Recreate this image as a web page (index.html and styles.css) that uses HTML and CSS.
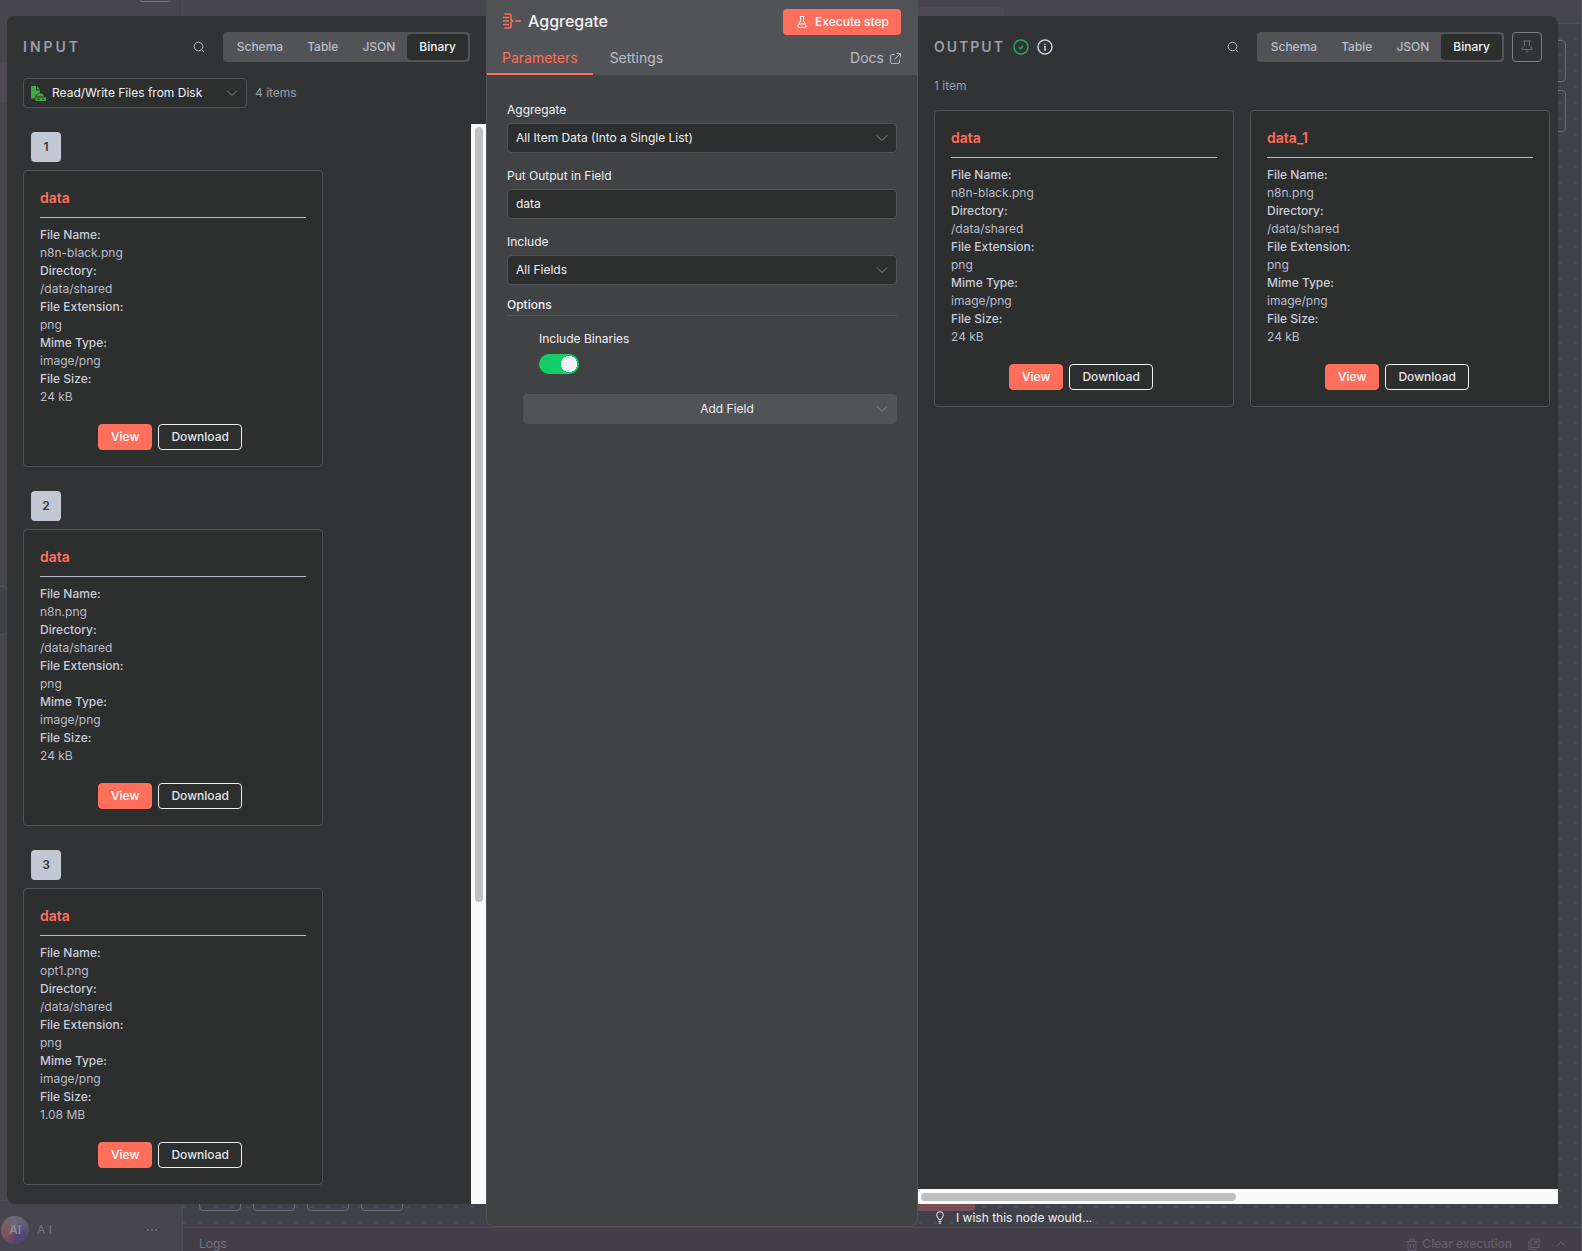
FILE: index.html
```html
<!DOCTYPE html>
<html lang="en">
  <head>
  <meta charset="utf-8">
  <title>Aggregate</title>
  <link rel="stylesheet" href="styles.css">
  </head>
  <body>

    <!-- icons used more than once -->
    <svg class="sprite" aria-hidden="true">
      <symbol id="chevron" viewBox="0 0 12 12"><path d="M1 3.5l5 5 5-5"/></symbol>
      <symbol id="search" viewBox="0 0 12 12"><circle cx="5.5" cy="5.5" r="4.3"/><path d="M8.8 8.8l2.4 2.4"/></symbol>
    </svg>

    <!-- editor, dimmed behind the dialog -->
    <div class="editor">
      <aside class="sidebar">
        <div class="sidebar-button"></div>
        <div class="sidebar-item"></div>
        <div class="user">
          <span class="avatar">AI</span>
          <span>A I</span>
          <svg class="user-more" width="12" height="4" viewBox="0 0 12 4"><circle cx="2" cy="2" r="1"/><circle cx="6" cy="2" r="1"/><circle cx="10" cy="2" r="1"/></svg>
        </div>
      </aside>
      <main class="workspace">
        <header class="topbar"><div class="topbar-tabs"></div></header>
        <div class="canvas">
          <div class="canvas-tools"><i></i><i></i></div>
          <div class="canvas-controls"><i></i><i></i><i></i><i></i></div>
          <div class="canvas-run"></div>
        </div>
        <footer class="logs">
          <span>Logs</span>
          <span class="logs-actions">
            <svg width="12" height="13" viewBox="0 0 12 13"><path d="M.5 3.5h11M2 3.5v8q0 1 1 1h6q1 0 1-1v-8M4 3V1h4v2M4.5 6v4M7.5 6v4"/></svg>
            <span class="logs-clear">Clear execution</span>
            <svg width="12" height="12" viewBox="0 0 12 12"><path d="M3 1h8v8.500h-8zM1 3v8.500h8M5 7.500l4-4M6 3.500h3v3"/></svg>
            <svg width="10" height="8" viewBox="0 0 10 8"><path d="M1 6l4-4 4 4"/></svg>
          </span>
        </footer>
      </main>
    </div>

    <div class="handle"></div>

    <div class="dialog">

      <!-- **************** INPUT ****************-->
      <section class="panel input">
        <div class="panel-head">
          <h2>INPUT</h2>
          <button class="icon-button" aria-label="Search input"><svg class="line" width="12" height="12"><use href="#search"/></svg></button>
          <div class="tabs">
            <button>Schema</button><button>Table</button><button>JSON</button><button class="active">Binary</button>
          </div>
        </div>
        <div class="source">
          <div class="select source-select">
            <svg class="file-icon" width="15" height="15" viewBox="0 0 15 15"><path d="M0 0h5v4.500h4v2L5 8.500 4 12.500H0zM6 0l3 3.500H6zM7 7.500h4l2.500 3H5zM4.500 11.500H15V15H4.500z"/><path class="file-slot" d="M6 13.200h3M11 13.200h2"/></svg>
            <select aria-label="Input node"><option>Read/Write Files from Disk</option></select>
            <svg class="chevron" width="12" height="12"><use href="#chevron"/></svg>
          </div>
          <span class="count">4 items</span>
        </div>
        <div class="input-scroll">
          <div class="input-list">
            <span class="index">1</span>
            <article class="card">
              <h3>data</h3>
              <dl>
                <dt>File Name:</dt><dd>n8n-black.png</dd>
                <dt>Directory:</dt><dd>/data/shared</dd>
                <dt>File Extension:</dt><dd>png</dd>
                <dt>Mime Type:</dt><dd>image/png</dd>
                <dt>File Size:</dt><dd>24 kB</dd>
              </dl>
              <div class="card-buttons"><button class="view">View</button><button class="download">Download</button></div>
            </article>
            <span class="index">2</span>
            <article class="card">
              <h3>data</h3>
              <dl>
                <dt>File Name:</dt><dd>n8n.png</dd>
                <dt>Directory:</dt><dd>/data/shared</dd>
                <dt>File Extension:</dt><dd>png</dd>
                <dt>Mime Type:</dt><dd>image/png</dd>
                <dt>File Size:</dt><dd>24 kB</dd>
              </dl>
              <div class="card-buttons"><button class="view">View</button><button class="download">Download</button></div>
            </article>
            <span class="index">3</span>
            <article class="card">
              <h3>data</h3>
              <dl>
                <dt>File Name:</dt><dd>opt1.png</dd>
                <dt>Directory:</dt><dd>/data/shared</dd>
                <dt>File Extension:</dt><dd>png</dd>
                <dt>Mime Type:</dt><dd>image/png</dd>
                <dt>File Size:</dt><dd>1.08 MB</dd>
              </dl>
              <div class="card-buttons"><button class="view">View</button><button class="download">Download</button></div>
            </article>
          </div>
          <div class="bar-vertical"><div class="thumb"></div></div>
        </div>
      </section>

      <!-- **************** NODE PARAMETERS ****************-->
      <section class="node">
        <header class="node-head">
          <div class="node-title">
            <svg class="aggregate-icon" width="18" height="18" viewBox="0 0 18 18"><path d="M1.500 1H6q2 0 2 2v3q0 2 2.500 2Q8 8 8 10v3q0 2-2 2H1.500M0 4.500h6M0 8h6M0 11.500h6M12.500 8H18"/></svg>
            <h1>Aggregate</h1>
            <button class="execute">
              <svg width="10" height="12" viewBox="0 0 10 12"><path d="M2.500.600h5M3.500.600v4.200L.800 10q-.400 1.300.900 1.300h6.600q1.300 0 .9-1.300L6.500 4.800V.600M2 8h6"/></svg>
              Execute step
            </button>
          </div>
          <nav class="node-tabs">
            <button class="active">Parameters</button>
            <button>Settings</button>
            <a href="#docs">Docs
              <svg width="11" height="11" viewBox="0 0 11 11"><path d="M4.500 1.600H1.500q-.900 0-.900.900v7q0 .900.900.900h7q.900 0 .900-.900V6.500M6.500.600h3.900v3.900M10.200.800L4.500 6.500"/></svg>
            </a>
          </nav>
        </header>
        <form class="params">
          <label for="aggregate">Aggregate</label>
          <div class="select">
            <select id="aggregate"><option>All Item Data (Into a Single List)</option></select>
            <svg class="chevron" width="12" height="12"><use href="#chevron"/></svg>
          </div>
          <label for="field">Put Output in Field</label>
          <input id="field" type="text" value="data">
          <label for="include">Include</label>
          <div class="select">
            <select id="include"><option>All Fields</option></select>
            <svg class="chevron" width="12" height="12"><use href="#chevron"/></svg>
          </div>
          <h4>Options</h4>
          <div class="option">
            <label for="binaries">Include Binaries</label>
            <input id="binaries" type="checkbox" class="switch" checked>
          </div>
          <div class="select add-field">
            <select aria-label="Add Field"><option>Add Field</option></select>
            <svg class="chevron" width="12" height="12"><use href="#chevron"/></svg>
          </div>
        </form>
      </section>

      <!-- **************** OUTPUT ****************-->
      <div class="output-column">
        <section class="panel output">
          <div class="panel-head">
            <h2>OUTPUT</h2>
            <svg class="status success" width="16" height="16" viewBox="0 0 16 16"><circle cx="8" cy="8" r="7"/><path d="M5.800 8.200l1.500 1.500 2.900-3"/></svg>
            <svg class="status" width="16" height="16" viewBox="0 0 16 16"><circle cx="8" cy="8" r="7"/><path d="M8 4.500v1.200M7 7.500h1v3.500M7 11h2"/></svg>
            <button class="icon-button" aria-label="Search output"><svg class="line" width="12" height="12"><use href="#search"/></svg></button>
            <div class="tabs">
              <button>Schema</button><button>Table</button><button>JSON</button><button class="active">Binary</button>
            </div>
            <button class="pin" aria-label="Pin data"><svg width="12" height="14" viewBox="0 0 12 14"><path d="M2 1h8M3.500 1v4.500L1.200 8v1.500h9.600V8L8.500 5.500V1M6 9.500V13"/></svg></button>
          </div>
          <p class="count">1 item</p>
          <div class="output-list">
            <article class="card">
              <h3>data</h3>
              <dl>
                <dt>File Name:</dt><dd>n8n-black.png</dd>
                <dt>Directory:</dt><dd>/data/shared</dd>
                <dt>File Extension:</dt><dd>png</dd>
                <dt>Mime Type:</dt><dd>image/png</dd>
                <dt>File Size:</dt><dd>24 kB</dd>
              </dl>
              <div class="card-buttons"><button class="view">View</button><button class="download">Download</button></div>
            </article>
            <article class="card">
              <h3>data_1</h3>
              <dl>
                <dt>File Name:</dt><dd>n8n.png</dd>
                <dt>Directory:</dt><dd>/data/shared</dd>
                <dt>File Extension:</dt><dd>png</dd>
                <dt>Mime Type:</dt><dd>image/png</dd>
                <dt>File Size:</dt><dd>24 kB</dd>
              </dl>
              <div class="card-buttons"><button class="view">View</button><button class="download">Download</button></div>
            </article>
          </div>
          <div class="bar-horizontal"><div class="thumb"></div></div>
        </section>
        <a class="wish" href="#feedback">
          <svg width="8" height="13" viewBox="0 0 8 13"><path d="M2.500 8.500Q2.500 7 1.500 6T.700 3.500Q1 .700 4 .700T7.300 3.500Q7.300 5 6.500 6t-1 2.500zM2.500 10.500h3M3 12.300h2"/></svg>
          I wish this node would...
        </a>
      </div>
    </div>
  </body>
</html>
```

FILE: styles.css
```css
* { box-sizing: border-box; }

body {
  margin: 0;
  height: 100vh;
  overflow: hidden;
  background: #414149;
  color: #f0f1f5;
  font: 12px/18px Inter, "Liberation Sans", sans-serif;
}

h1, h2, h3, h4, p, dl, dd { margin: 0; }
button, input, select { font: inherit; color: inherit; margin: 0; }
button { border: 0; background: none; padding: 0; }
a { color: inherit; text-decoration: none; }
svg { fill: none; stroke: currentColor; flex: none; }
.sprite { position: absolute; width: 0; height: 0; }

/* ---------- editor behind the dialog ---------- */
.editor {
  position: absolute;
  inset: 0;
  display: flex;
  color: #75747f;
}

.sidebar {
  width: 183px;
  display: flex;
  flex-direction: column;
  background: #47464f;
  border-right: 1px solid #4d4c57;
}
.sidebar-button {
  width: 30px;
  height: 2px;
  margin: 0 12px 60px auto;
  border: 1px solid #7a7985;
  border-top: 0;
  border-radius: 0 0 4px 4px;
}
.sidebar-item { height: 40px; background: #4d4a56; }
.user {
  display: flex;
  align-items: center;
  height: 51px;
  margin-top: auto;
  padding: 8px 24px 0 1px;
  border-top: 1px solid #4d4c57;
}
.avatar {
  width: 28px;
  height: 28px;
  margin-right: 8px;
  border-radius: 50%;
  background: conic-gradient(from 0deg, #6c6c78, #4d4675 35%, #55466c 50%, #80505a 65%, #6c6c78);
  color: #8a8994;
  line-height: 28px;
  font-weight: 600;
  text-align: center;
}
.user-more { margin-left: auto; fill: currentColor; stroke: none; }

.workspace {
  flex: 1;
  display: flex;
  flex-direction: column;
  border-right: 1px solid #55555c;
}
.topbar {
  height: 24px;
  padding-top: 7px;
  background: #47464f;
  border-bottom: 1px solid #4d4c57;
}
.topbar-tabs {
  width: 240px;
  height: 16px;
  margin-left: 581px;
  border-radius: 4px 4px 0 0;
  background: #4d4a56;
}
.canvas {
  position: relative;
  flex: 1;
  background: radial-gradient(circle at 1px 1px, #4d4d56 1px, transparent 1px) 0 14px / 16px 16px #414149;
}
.canvas i { display: block; width: 42px; height: 42px; border: 1px solid #6d6c79; border-radius: 4px; }
.canvas-tools { position: absolute; top: 16px; right: 15px; display: grid; gap: 8px; }
.canvas-controls { position: absolute; left: 16px; bottom: 16px; display: flex; gap: 12px; }
.canvas-run {
  position: absolute;
  left: 680px;
  bottom: 16px;
  width: 112px;
  height: 42px;
  border-radius: 4px;
  background: #79505a;
}
.logs {
  display: flex;
  justify-content: space-between;
  height: 24px;
  padding: 7px 15px 0 16px;
  background: #423f49;
  border-top: 1px solid #4d4954;
}
.logs-actions { display: flex; align-items: center; height: 18px; gap: 16px; color: #63616d; }
.logs-clear { margin-left: -12px; font-weight: 500; }

.handle {
  position: absolute;
  top: 586px;
  left: -8px;
  width: 16px;
  height: 49px;
  border: 1px solid #525356;
  border-radius: 5px;
  background: #414244;
}

/* ---------- dialog ---------- */
.dialog {
  position: relative;
  display: flex;
  height: 100vh;
  padding: 0 24px 0 7px;
}

.panel {
  display: flex;
  flex-direction: column;
  min-width: 0;
  background: #323335;
  color: #b9bdca;
}
.input {
  flex: 479;
  margin: 16px 0 47px;
  border-radius: 8px 0 0 8px;
  overflow: hidden;
}
.panel-head {
  display: flex;
  align-items: center;
  gap: 8px;
  height: 30px;
  margin: 16px 16px 0;
}
.panel h2 {
  color: #9b9ea9;
  font-size: 14px;
  font-weight: 600;
  letter-spacing: 3px;
}
.icon-button { display: flex; margin: 0 10px 0 auto; padding: 0; }
.tabs {
  display: flex;
  height: 30px;
  padding: 2px;
  border-radius: 4px;
  background: #525356;
}
.tabs button { padding: 0 12px; border-radius: 4px; font-weight: 500; }
.tabs .active { background: #2d2e2e; color: #f0f1f5; }

.source { display: flex; align-items: center; gap: 8px; margin: 16px 16px 0; }
.source-select { width: 224px; color: #f0f1f5; }
.source-select select { padding-left: 28px; }
.file-icon { position: absolute; left: 8px; top: 8px; fill: #40a843; stroke: none; }
.file-slot { stroke: #2d2e2e; }
.count { color: #9b9ea9; }

.input-scroll { display: flex; flex: 1; min-height: 0; margin-top: 16px; }
.input-list { flex: 1; padding: 8px 16px 0; overflow: hidden; }
.index {
  display: block;
  width: 30px;
  height: 30px;
  margin: 0 8px 8px;
  border-radius: 4px;
  background: #c3c8d5;
  color: #36373a;
  line-height: 30px;
  font-weight: 600;
  text-align: center;
}
.bar-vertical { width: 15px; padding: 3px 3px 0 4px; background: #fafafa; }
.bar-vertical .thumb { height: 72%; }
.thumb { border-radius: 4px; background: #c1c1c1; }

.card {
  width: 300px;
  flex: none;
  padding: 16px;
  border: 1px solid #525356;
  border-radius: 4px;
  background: #2d2e2e;
}
.input-list .card { margin-bottom: 24px; }
.card h3 {
  height: 31px;
  margin-bottom: 8px;
  border-bottom: 1px solid #b9bdca;
  color: #ff6f5c;
  font-size: 14px;
  line-height: 22px;
  font-weight: 600;
}
.card dt { color: #c8ccd8; font-weight: 500; }
.card-buttons { display: flex; justify-content: center; margin-top: 18px; }
.card-buttons button { height: 26px; margin-right: 6px; padding: 0 12px; border: 1px solid #f0f1f5; border-radius: 4px; font-weight: 500; }
.card-buttons .view { border-color: #ff6f5c; background: #ff6f5c; color: #fff; }
.card-buttons .download { color: #e3e5ec; }

/* ---------- node parameters ---------- */
.node {
  width: 432px;
  margin-bottom: 24px;
  border: 1px solid #525356;
  border-top: 0;
  border-radius: 0 0 8px 8px;
  background: #414244;
}
.node-head { height: 75px; background: #525356; }
.node-title { display: flex; align-items: center; padding: 9px 16px 0; }
.aggregate-icon { height: 18px; color: #ff6f5c; stroke-width: 1.5; }
.node h1 { margin-left: 7px; padding-bottom: 2px; font-size: 16px; font-weight: 500; }
.execute {
  display: flex;
  align-items: center;
  gap: 8px;
  height: 26px;
  margin-left: auto;
  padding: 0 12px 0 14px;
  border-radius: 4px;
  background: #ff6f5c;
  color: #fff;
  font-weight: 500;
}
.node-tabs { display: flex; height: 40px; color: #b9bdca; font-size: 14px; }
.node-tabs button { padding: 8px 15px 0; border-bottom: 2px solid transparent; }
.node-tabs button + button { padding-left: 17px; }
.node-tabs .active { border-color: #ff6f5c; color: #ff6f5c; }
.node-tabs a { display: flex; gap: 6px; align-items: center; margin: 0 16px 0 auto; padding-top: 6px; }

.params { padding: 24px 20px; }
.params label { display: block; margin: 2px 0 4px; }
.select { position: relative; }
select, .params input[type=text] {
  display: block;
  width: 100%;
  height: 30px;
  padding: 0 8px;
  border: 1px solid #525356;
  border-radius: 4px;
  background: #2d2e2e;
  appearance: none;
}
.params input[type=text] { padding-bottom: 1px; }
.chevron { position: absolute; right: 9px; top: 9px; color: #8b8c95; pointer-events: none; }
.params > .select, .params > input { margin-bottom: 14px; }
.params h4 {
  height: 20px;
  margin-top: -3px;
  border-bottom: 1px solid #525356;
  font-weight: 500;
}
.option { padding: 12px 32px 0; }
.option label { margin-bottom: 6px; }
.switch {
  display: block;
  width: 40px;
  height: 20px;
  border-radius: 10px;
  appearance: none;
  background: radial-gradient(circle at 30px 10px, #f2f3f8 8px, transparent 8px) #13ce66;
}
.params > .add-field { margin: 20px 0 0 16px; }
.add-field select { padding: 0 0 0 34px; background: #525356; text-align: center; text-align-last: center; }

/* ---------- output ---------- */
.output-column { flex: 640; display: flex; flex-direction: column; min-width: 0; }
.output {
  flex: 1;
  margin-top: 16px;
  border-radius: 0 8px 0 0;
  overflow: hidden;
}
.output h2 { letter-spacing: 2px; }
.status { color: #c8ccd8; stroke-width: 1.5; }
.success { color: #26a566; }
.pin {
  display: flex;
  align-items: center;
  justify-content: center;
  width: 30px;
  height: 30px;
  border: 1px solid #7d7e87;
  border-radius: 4px;
  color: #6d6e74;
}
.output .count { margin: 15px 16px; }
.output-list { display: flex; gap: 16px; flex: 1; align-items: start; padding-left: 16px; overflow: hidden; }
.bar-horizontal { height: 15px; padding: 4px 8px 4px 3px; background: #fafafa; }
.bar-horizontal .thumb { width: 50%; height: 8px; }
.wish { display: flex; align-items: center; gap: 12px; height: 47px; padding: 0 0 20px 18px; }
```
